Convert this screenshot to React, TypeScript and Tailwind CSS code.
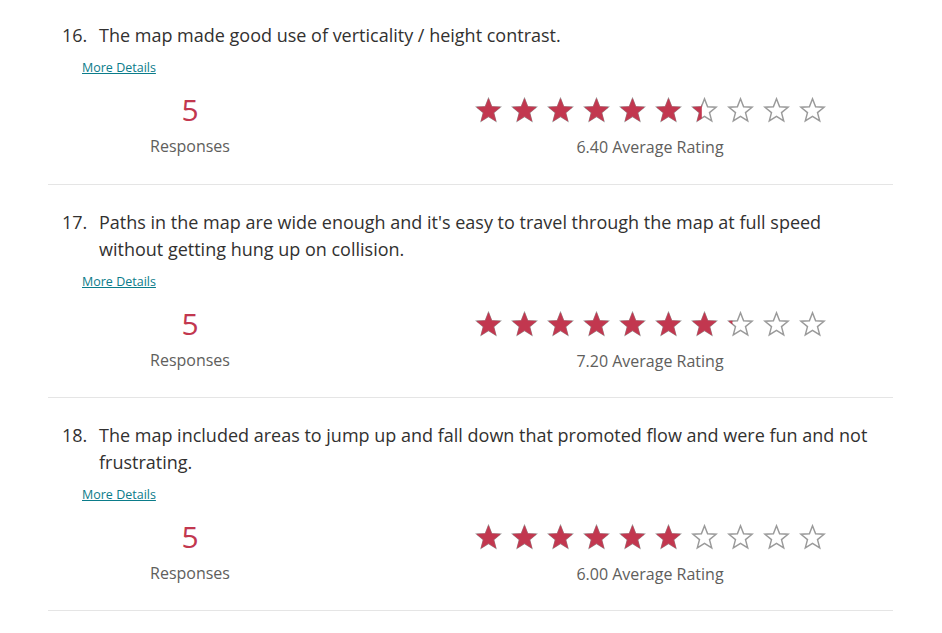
import React, { useId } from "react";

const STAR =
  "M12 1.6l2.75 7.05 7.55.45-5.85 4.8 1.95 7.35L12 17.2l-6.4 4.05 1.95-7.35-5.85-4.8 7.55-.45z";

const Star = ({ fill }: { fill: number }) => {
  const id = useId().replace(/:/g, "");
  return (
    <svg width="27" height="27" viewBox="0 0 24 24" className="shrink-0">
      <defs>
        <clipPath id={`c${id}`}>
          <rect x="0" y="0" width={24 * fill} height="24" />
        </clipPath>
      </defs>
      <path d={STAR} fill="none" stroke="#9a9a9a" strokeWidth="1.3" strokeLinejoin="miter" />
      {fill > 0 && (
        <path d={STAR} fill="#c2374f" stroke="#c2374f" strokeWidth="0.6" clipPath={`url(#c${id})`} />
      )}
    </svg>
  );
};

const questions = [
  {
    num: "16.",
    text: "The map made good use of verticality / height contrast.",
    responses: 5,
    rating: 6.4,
  },
  {
    num: "17.",
    text: "Paths in the map are wide enough and it's easy to travel through the map at full speed without getting hung up on collision.",
    responses: 5,
    rating: 7.2,
  },
  {
    num: "18.",
    text: "The map included areas to jump up and fall down that promoted flow and were fun and not frustrating.",
    responses: 5,
    rating: 6.0,
  },
];

export default function App() {
  return (
    <div
      className="w-[942px] h-[633px] bg-white overflow-hidden"
      style={{ fontFamily: '"Segoe UI", "Open Sans", "Noto Sans", sans-serif' }}
    >
      <div className="ml-[48px] w-[845px]">
        {questions.map((q, idx) => (
          <div
            key={q.num}
            className={`${idx === 0 ? "pt-[22px] pb-[26px]" : "pt-[24px] pb-[25px]"} border-b border-[#e5e5e5]`}
          >
            <div className="flex pl-[14px] pr-[13px] text-[18px] leading-[27px] text-[#323130]">
              <span className="w-[37px] shrink-0">{q.num}</span>
              <span>{q.text}</span>
            </div>
            <div className="pl-[34px] mt-[8px] leading-[18px]">
              <a href="#" className="text-[12.5px] text-[#0b7c8a] underline">
                More Details
              </a>
            </div>
            <div className="flex mt-[14px]">
              <div className="ml-[34px] w-[216px] flex flex-col items-center">
                <div className="text-[30px] leading-[38px] text-[#c2374f]">{q.responses}</div>
                <div className="text-[16px] leading-[22px] mt-[6px] text-[#605e5c]">Responses</div>
              </div>
              <div className="ml-[174px] w-[356px] flex flex-col items-center">
                <div className="flex gap-[9px] mt-[6px]">
                  {Array.from({ length: 10 }).map((_, i) => (
                    <Star key={i} fill={Math.max(0, Math.min(1, q.rating - i))} />
                  ))}
                </div>
                <div className="text-[16px] leading-[22px] mt-[12px] text-[#605e5c]">
                  {q.rating.toFixed(2)} Average Rating
                </div>
              </div>
            </div>
          </div>
        ))}
      </div>
    </div>
  );
}
